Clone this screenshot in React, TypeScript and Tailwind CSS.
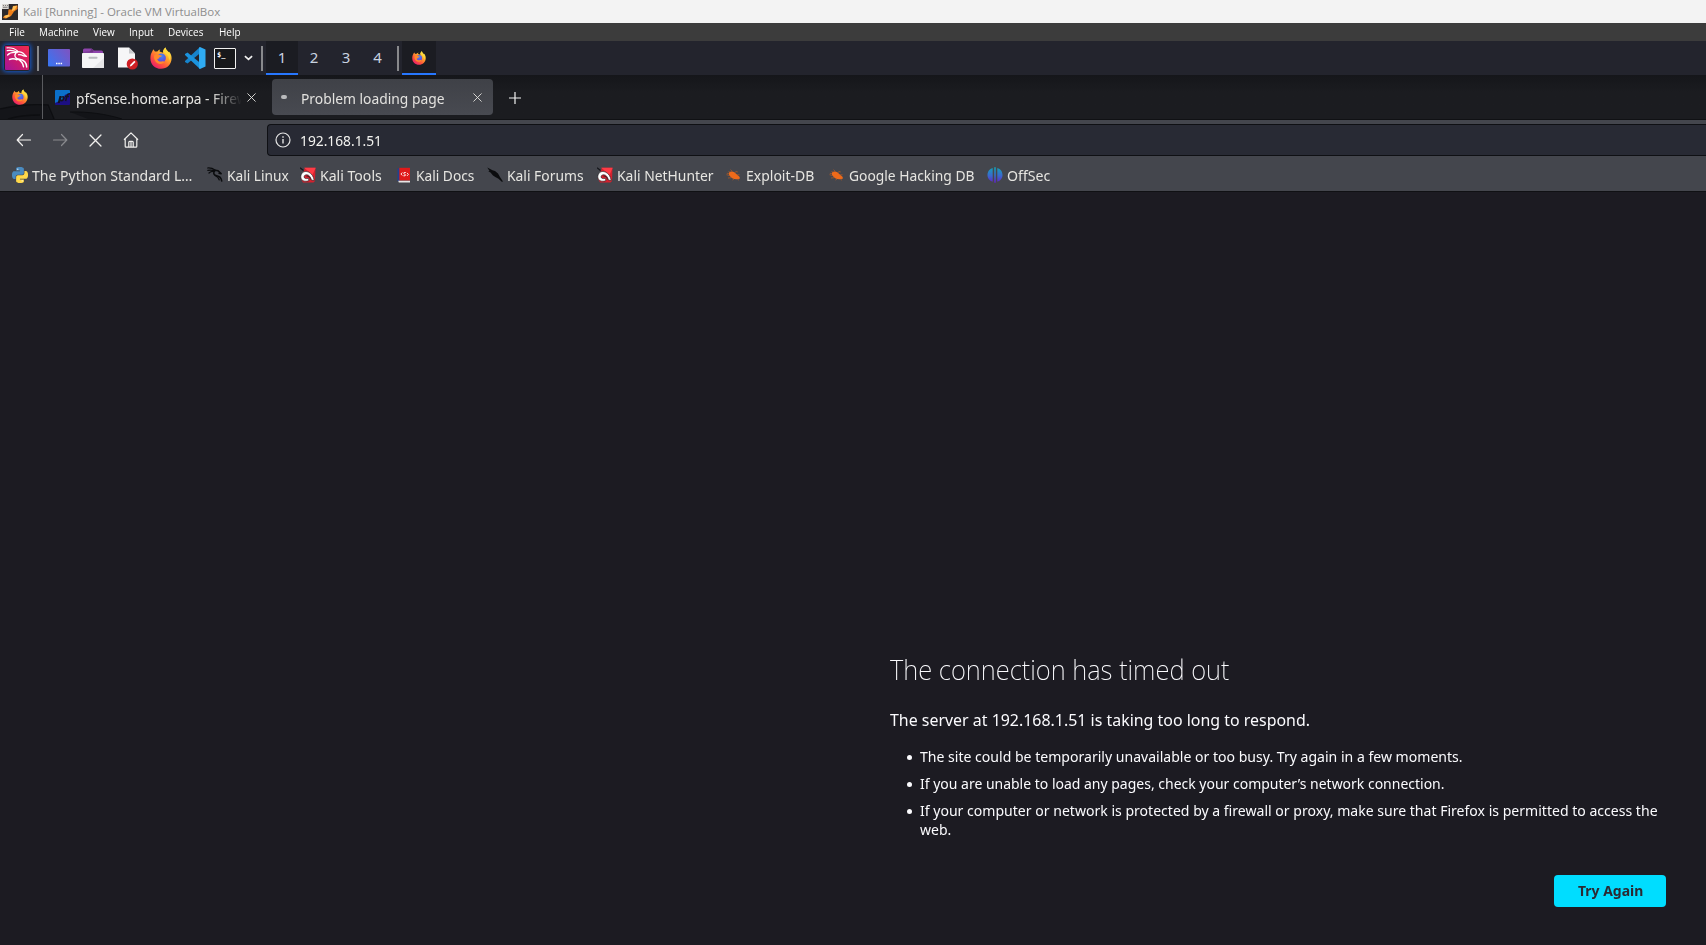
import type { ReactNode } from "react";

/* Narrow humanist text used by the guest desktop and the browser. */
function Text({ children, className = "", fit = "scale-x-[0.937]" }: { children: ReactNode; className?: string; fit?: string }) {
  return <span className={`inline-block origin-left whitespace-nowrap ${fit} ${className}`}>{children}</span>;
}

function Firefox({ className }: { className: string }) {
  return (
    <svg viewBox="0 0 32 32" className={className}>
      <defs>
        <linearGradient id="ffBody" x1="0.85" y1="0.1" x2="0.2" y2="0.95">
          <stop offset="0" stopColor="#fff04a" />
          <stop offset="0.35" stopColor="#ffa52b" />
          <stop offset="0.65" stopColor="#ff5a38" />
          <stop offset="1" stopColor="#ec1b6b" />
        </linearGradient>
        <radialGradient id="ffGlobe" cx="0.5" cy="0.3" r="0.7">
          <stop offset="0" stopColor="#3f8df5" />
          <stop offset="1" stopColor="#6a3fd6" />
        </radialGradient>
      </defs>
      <path
        d="M3 7c.6-1.800 1.600-3 2.400-3.600.3 1.400 1 2.500 1.800 3.300 1-.3 2.300-.4 3.500-.2C12 4.800 13.600 4 15 3.700c-.9 1-1.200 2-1.100 3l5.200 1.600C18.800 5 20.300 2.400 22.800.8c.2 3.200 2 4.300 4.400 6.900.4-.2.5-.6.400-1.200 3 3.200 3.900 6.900 3.800 10.200C31 25.500 24.500 31.700 16 31.700 7.300 31.700.7 25.300.6 16.600.6 12.700 1.300 9.700 3 7z"
        fill="url(#ffBody)"
      />
      <path d="M22.800.8c.2 3.200 2 4.300 4.400 6.900 2.800 4 2.700 9 .5 12.400.5-5.300-1.500-9-6-11.500-2-1-2.600-1.500-2.600-1.500.2-2.800 1.500-5 3.700-6.300z" fill="#ffd83d" />
      <circle cx="16.500" cy="16" r="6.600" fill="url(#ffGlobe)" />
      <path
        d="M6 12.500c2-2.200 4.500-2.500 6.800-1.600 1.300 1.400 3.200 1.400 4.700 1.500-.1 1.400-1.500 2-3 2.300-.8.3-1 1.200-1.600 1.900-.8.600-1.800.2-2.300 1.200.9 2.700 3.600 4 6.500 3.200 2-.6 3.500-.3 4.200.6-2.500 3.800-8.600 4.300-12.300.7C6.400 19.700 5.400 16 6 12.500z"
        fill="#ff8a2b"
      />
    </svg>
  );
}

function KaliLauncher() {
  return (
    <div className="flex size-[26px] items-center justify-center rounded-[3px] shadow-[0_0_4px_1px_#145bd0]">
      <svg viewBox="0 0 24 24" className="size-6">
        <defs>
          <linearGradient id="kaliBg" x1="1" y1="0" x2="0" y2="1">
            <stop offset="0" stopColor="#f12a4e" />
            <stop offset="0.5" stopColor="#cf1c68" />
            <stop offset="1" stopColor="#a3159b" />
          </linearGradient>
        </defs>
        <rect width="24" height="24" rx="1" fill="url(#kaliBg)" />
        <g fill="none" stroke="#fff" strokeLinecap="round" strokeLinejoin="round">
          <path d="M2 1.800C6 1.600 10 2.600 12.500 5M2.200 4.600c3.500-.6 7 0 10 1.400" strokeWidth="1.200" />
          <path d="M2.600 9C4.500 6.900 8 6 12 6.600M12.500 5.600c3 0 5.400.8 6.800 2.800l2.200 2-2.900-.5c-1.700-1-3.200-1.500-5-1.300" strokeWidth="1.300" />
          <path d="M10.800 7C8.700 9.900 10.300 12.700 14.500 13.200c4.600.7 7 2.800 7.200 7.800M11.500 12.400c4.200 2 6.600 4.300 7 8.300M4.500 13.500c2.500-1.200 5-1 7.500.3" strokeWidth="1.400" />
        </g>
      </svg>
    </div>
  );
}

function VirtualBoxIcon() {
  return (
    <svg viewBox="0 0 16 16" className="size-4">
      <rect width="16" height="16" fill="#2d2a2c" />
      <path d="M6.500 5.500h4L11 2l4.500-.5V5L12 7.500 9 12l-5 2.500L1 14l1-2 4-1.200z" fill="#ef7f1a" />
      <path d="M11 2.200l4-.5-2.200 4-3 1.300zM2 12l4.500-1.600L8 12l-4 2z" fill="#ffc15a" />
      <rect width="6.700" height="5" fill="#d9d6d2" />
      <path d="M1 1.500h1m1 0h1m1 0h1M1 3.300h4.500" stroke="#6d6a68" strokeWidth="0.800" />
    </svg>
  );
}

function DesktopIcon() {
  return (
    <svg viewBox="0 0 22 18" className="h-[18px] w-[22px]">
      <defs>
        <linearGradient id="desk" x1="0" y1="0.800" x2="1" y2="0.200">
          <stop offset="0" stopColor="#3b74f0" />
          <stop offset="1" stopColor="#7a55c4" />
        </linearGradient>
      </defs>
      <rect width="22" height="17.500" rx="0.800" fill="url(#desk)" />
      <path d="M8 14.500h1.500m.8 0h1.500m.8 0h1.500" stroke="#fff" strokeWidth="1.500" />
    </svg>
  );
}

function FolderIcon() {
  return (
    <svg viewBox="0 0 22 20" className="h-5 w-[22px]">
      <path d="M1 2a1.500 1.500 0 0 1 1.500-1.500h7L12 2.500h7.500A1.500 1.500 0 0 1 21 4v5H1z" fill="#8f44ad" />
      <path d="M9.500.5 12 2.500 10.500 4.500H1V4l7-.5z" fill="#6c3483" />
      <rect y="5" width="22" height="15" rx="0.800" fill="#f5f5f6" />
      <path d="M22 10v9.200a.8.8 0 0 1-.8.8H11z" fill="#e6e6e8" />
      <rect x="6.500" y="8.800" width="9" height="2" rx="0.800" fill="#b9bbbf" />
    </svg>
  );
}

function DocumentIcon() {
  return (
    <svg viewBox="0 0 22 23" className="h-[23px] w-[22px]">
      <path d="M1 .5h11l6 6v14H1z" fill="#f6f6f7" />
      <path d="M12 .5l6 6h-6z" fill="#c9cacd" />
      <circle cx="15.300" cy="17" r="5.600" fill="#cf1f24" />
      <path d="M12.800 19.500l.5-1.700 4-4 1.200 1.200-4 4z" fill="#fff" />
    </svg>
  );
}

function VsCodeIcon() {
  return (
    <svg viewBox="0 0 22 22" className="size-[22px]">
      <path d="M16 0v6.200L3.500 16.500 1 15.100V14z" fill="#1684cd" />
      <path d="M16 22v-6.200L3.500 5.500 1 6.900V8z" fill="#1b93de" />
      <path d="M16 0l5.500 2.500v17L16 22l-1-.7V.7z" fill="#2fabf3" />
    </svg>
  );
}

function TerminalIcon() {
  return (
    <div className="flex h-[21px] w-[22px] items-start rounded-[1px] border border-[#f1f1f1] bg-[#17181b] pt-[3px] pl-[2px]">
      <span className="font-['DejaVu_Sans_Mono',monospace] text-[7px] leading-[7px] font-bold text-white">$_</span>
    </div>
  );
}

function Python() {
  const d =
    "M14.250.18l.9.2.73.26.59.3.45.32.34.34.25.34.16.33.1.3.04.26.02.2-.01.13V8.500l-.05.63-.13.55-.21.46-.26.38-.3.31-.33.25-.35.19-.35.14-.33.1-.3.07-.26.04-.21.02H8.770l-.69.05-.59.14-.5.22-.41.27-.33.32-.27.35-.2.36-.15.37-.1.35-.07.32-.04.27-.02.21v3.060H3.170l-.21-.03-.28-.07-.32-.12-.35-.18-.36-.26-.36-.36-.35-.46-.32-.59-.28-.73-.21-.88-.14-1.050-.05-1.230.06-1.220.16-1.040.24-.87.32-.71.36-.57.4-.44.42-.33.42-.24.4-.16.36-.1.32-.05.24-.01h.16l.06.01h8.160v-.83H6.180l-.01-2.750-.02-.37.05-.34.11-.31.17-.28.25-.26.31-.23.38-.2.44-.18.51-.15.58-.12.64-.1.71-.06.77-.04.84-.02 1.270.05z";
  return (
    <svg viewBox="0 0 24 24" className="size-4">
      <path d={d} fill="#4a8bc0" />
      <path d={d} fill="#ffd94a" transform="rotate(180 12 12)" />
      <circle cx="8.700" cy="3.300" r="0.900" fill="#fff" />
      <circle cx="15.300" cy="20.700" r="0.900" fill="#fff" />
    </svg>
  );
}

function Dragon() {
  return (
    <svg viewBox="0 0 16 16" className="size-4 text-[#0b0c0e]" fill="none" stroke="currentColor" strokeLinecap="round" strokeLinejoin="round">
      <path d="M.6 1C3.500.8 6 1.500 8 3M.8 3.400C3.500 2.800 6 3.200 8 4M2 6c1.500-1.400 3-1.800 5-1.500" strokeWidth="1.200" />
      <path d="M7.300 4.300C6 6.400 7 8.400 9.700 8.700c3 .4 4.600 2 5 5.300M8.300 3.300c2 0 3.500.6 4.400 2l1.400 1.300-2-.3" strokeWidth="1.600" />
      <path d="M8 8.500c2.300.9 3.700 2.300 4.300 4.500" strokeWidth="1.200" />
    </svg>
  );
}

function KaliTools() {
  return (
    <svg viewBox="0 0 16 16" className="size-4">
      <path d="M5 .8H15.500L15 14 13.500 15.500H3L.8 11.500z" fill="#d4212e" />
      <path d="M4 .8H15.700L12.500 8 8 4z" fill="#ff3b45" />
      <path d="M0 .8 3.500 3.500" stroke="#15161a" strokeWidth="1.300" />
      <path
        d="M.8 9.500C1 5.500 4.500 3.500 8.300 5c3.200 1.300 5.300 4.500 5.900 8.500l-2.700-.4C10.500 9.500 9 8 7 7.800c-2-.2-3 .9-2.900 2.200.1 1.500 2 2 4.200 1.300l.7 2.200C5.500 15.200.6 14 .8 9.500z"
        fill="#fff"
        stroke="#1a1b1e"
        strokeWidth="0.600"
      />
      <path d="M6.500 9.200c2-.5 3.500.9 4 3.300" fill="none" stroke="#1a1b1e" strokeWidth="0.700" />
    </svg>
  );
}

function KaliDocs() {
  return (
    <svg viewBox="0 0 16 16" className="size-4">
      <path d="M1.500 1.500 4 1v12.500l-2.500.8z" fill="#23408e" />
      <path d="M3.300.8H14v12.700H3.300z" fill="#e01a1a" />
      <path d="M2.200 13.800H14V15.400H2.800z" fill="#e8e6e6" />
      <path d="M6.300 5.500 4.900 7l1.400 1.500M11 5.900 12.400 7.400 11 8.900M9.800 5.500H8.200l-.6.900 2 1.400-.6 1H7.400" fill="none" stroke="#fff" strokeWidth="0.900" />
    </svg>
  );
}

function KaliForums() {
  return (
    <svg viewBox="0 0 16 16" className="size-4">
      <path d="M.3.500 5.500 3.200 8 4l3 2.600 2 3.400 3 4.500-1.200.2-3.300-3-2.800-1.500L6 8.500 3.500 5.500 1.200 4.200l1.300-.1z" fill="#0b0c0e" />
    </svg>
  );
}

function ExploitBug() {
  return (
    <svg viewBox="0 0 16 16" className="size-4">
      <path d="M3 5.500C5 3.800 8 4.500 10 6.700l3.500 3 .5 1.800-2.500.7C8 12.600 5 11.200 3 8z" fill="#ee6a1a" />
      <path
        d="M4 5.500 2.500 4M6.500 4.500 4.500 2.700M9 5.800l.8-1.300 2 .5M3.500 8.500l-3-.8M5.500 10.700l-3.500.3M8 12l-1.500 1M11.500 12l1.500 1.300M.8 6.300l2.200.2M11 8l2.500-.3"
        stroke="#c9601f"
        strokeWidth="0.600"
        fill="none"
      />
    </svg>
  );
}

function OffSecIcon() {
  return (
    <svg viewBox="0 0 16 16" className="size-4">
      <defs>
        <linearGradient id="offsec" gradientUnits="userSpaceOnUse" x1="8" y1="0" x2="8" y2="16">
          <stop offset="0" stopColor="#12a5b4" />
          <stop offset="0.550" stopColor="#3a68cf" />
          <stop offset="1" stopColor="#6420c0" />
        </linearGradient>
      </defs>
      <path d="M5.700 1v13.700C2.500 14 .5 11.200.5 8S2.500 1.800 5.700 1zM10.300 1c3.300.8 5.200 3.800 5.200 7s-2 6-5.200 6.700zM7.200.3h1.600v15.400H7.200z" fill="url(#offsec)" />
    </svg>
  );
}

function PfSenseIcon() {
  return (
    <svg viewBox="0 0 15 15" className="size-[15px]">
      <rect width="15" height="15" rx="1" fill="#1c0f83" />
      <path d="M1 0h13a1 1 0 0 1 1 1v2.500L12 4l-2.200 1L8.500 9 0 13V1a1 1 0 0 1 1-1z" fill="#0b70c9" />
      <path d="M2.700 13 4.500 6h2l-.2.800C8 5.200 10 6 9.600 8.300 9.200 11 7 12 5.300 11L4.800 13z" fill="#14131f" />
      <path d="M10.600 11l1.600-5.500C12.600 4.200 13.500 3.600 15 3.800M10 6.500h4" stroke="#14131f" strokeWidth="1.500" fill="none" />
      <path d="M5.800 9.500l.6-2 1.400-.1-.5 2z" fill="#0b70c9" />
    </svg>
  );
}

function Cross({ className }: { className: string }) {
  return (
    <svg viewBox="0 0 10 10" className={className} fill="none" stroke="currentColor" strokeLinecap="round">
      <path d="M.8.800 9.200 9.200M9.200.8.800 9.200" />
    </svg>
  );
}

function Arrow({ className }: { className: string }) {
  return (
    <svg viewBox="0 0 16 16" className={className} fill="none" stroke="currentColor" strokeWidth="1.200" strokeLinecap="round" strokeLinejoin="round">
      <path d="M1.500 8H14.500M6.500 2.500 1.200 8l5.300 5.500" />
    </svg>
  );
}

const menus = [
  { label: "File", box: "w-[30px]" },
  { label: "Machine", box: "w-[53.500px]" },
  { label: "View", box: "w-[36px]" },
  { label: "Input", box: "w-[39.500px]" },
  { label: "Devices", box: "w-[51px]" },
  { label: "Help", box: "w-[40px]" },
];

const bookmarks = [
  { label: "The Python Standard L…", icon: <Python />, box: "w-[195px]", fit: "scale-x-[0.958]" },
  { label: "Kali Linux", icon: <Dragon />, box: "w-[93px]" },
  { label: "Kali Tools", icon: <KaliTools />, box: "w-[95.500px]", fit: "scale-x-[0.960]" },
  { label: "Kali Docs", icon: <KaliDocs />, box: "w-[91.500px]" },
  { label: "Kali Forums", icon: <KaliForums />, box: "w-[110px]", fit: "scale-x-[0.945]" },
  { label: "Kali NetHunter", icon: <KaliTools />, box: "w-[129px]", fit: "scale-x-[0.947]" },
  { label: "Exploit-DB", icon: <ExploitBug />, box: "w-[103px]", fit: "scale-x-[0.955]" },
  { label: "Google Hacking DB", icon: <ExploitBug />, box: "w-[158px]", fit: "scale-x-[0.943]" },
  { label: "OffSec", icon: <OffSecIcon />, box: "w-[70px]", fit: "scale-x-[0.965]" },
];

function HostBars() {
  return (
    <>
      <div className="flex h-[23px] items-center gap-[5px] bg-[#f3f3f3] pl-[2px]">
        <VirtualBoxIcon />
        <span className="font-['Open_Sans',sans-serif] text-[11.500px] leading-[23px] text-[#8e8e8e]">
          Kali [Running] - Oracle VM VirtualBox
        </span>
      </div>
      <div className="flex h-[18px] items-center bg-[#3c3c3c] pl-[9px] font-['Open_Sans',sans-serif] text-[11px] leading-[18px] text-white">
        {menus.map((m) => (
          <div key={m.label} className={`shrink-0 ${m.box}`}>
            <span className="inline-block origin-left scale-x-[0.905]">{m.label}</span>
          </div>
        ))}
      </div>
    </>
  );
}

function Separator() {
  return <div className="mt-[5px] h-[25px] w-[2px] shrink-0 bg-[#88898c]" />;
}

function Taskbar() {
  return (
    <div className="flex h-[34px] items-start bg-[#23242d]">
      <div className="flex h-[34px] w-[37px] items-center pl-[4px]">
        <KaliLauncher />
      </div>
      <Separator />
      <div className="flex h-[34px] w-[222px] items-center pl-[9px]">
        <div className="w-[34px]"><DesktopIcon /></div>
        <div className="w-[35px]"><FolderIcon /></div>
        <div className="w-[33px]"><DocumentIcon /></div>
        <div className="w-[34px]"><Firefox className="size-[22px]" /></div>
        <div className="w-[30px]"><VsCodeIcon /></div>
        <TerminalIcon />
        <svg viewBox="0 0 10 6" className="ml-[8px] h-[6px] w-[9px]" fill="none" stroke="#f0f0f0" strokeWidth="1.800">
          <path d="M1 1l4 3.600L9 1" />
        </svg>
      </div>
      <Separator />
      <div className="ml-[3px] flex h-[34px] text-[15px] text-[#c9d3e0]">
        <div className="flex w-8 justify-center border-b-2 border-[#2777ff] bg-[#1b1c22] leading-[32px]">1</div>
        <div className="flex w-8 justify-center leading-[32px]">2</div>
        <div className="flex w-8 justify-center leading-[32px]">3</div>
        <div className="flex w-[35px] justify-center pr-1 leading-[32px]">4</div>
      </div>
      <Separator />
      <div className="ml-[3px] flex h-[34px] w-[34px] items-center justify-center border-b-2 border-[#2777ff] bg-[#1b1c22] pt-px">
        <Firefox className="size-[14px]" />
      </div>
    </div>
  );
}

function TabStrip() {
  return (
    <div className="relative flex h-[44px] bg-linear-to-b from-[#15161a] to-[#1b1c20] to-40%">
      <svg className="absolute top-0 left-0 h-[44px] w-[140px]" viewBox="0 0 140 44" fill="none">
        <path d="M0 35c12-3 28-5 47-4l6 13H0z" fill="#141519" />
        <path d="M0 34c14-3.500 30-5 48-4l6 14M8 44c10-3 22-4 32-4" stroke="#0d0e11" strokeWidth="1.500" />
        <path d="M70 37c18-.5 36 2 52 7H88z" fill="#131418" />
        <path d="M70 37c18-.5 36 2 52 7" stroke="#0d0e11" strokeWidth="1" />
      </svg>
      <div className="relative flex w-[42px] shrink-0 items-center pl-[12px]">
        <Firefox className="size-4" />
      </div>
      <div className="relative flex w-[230px] shrink-0 items-center border-l border-[#5a5b5f] pl-[12px] text-[#e7e6e3]">
        <PfSenseIcon />
        <div className="mt-[2px] ml-[6px] w-[169px] shrink-0 mask-r-from-80% mask-r-to-98%">
          <Text className="text-[14.670px] leading-6">pfSense.home.arpa - Firew</Text>
        </div>
        <Cross className="ml-[2px] size-[9px] shrink-0" />
      </div>
      <div className="relative mt-[4px] flex h-[36px] w-[221px] shrink-0 items-center rounded-[4px] bg-linear-to-b from-[#3f4147] to-[#484a51] pl-[9px] text-[#e3e2df]">
        <div className="h-[4px] w-[6px] rounded-full bg-[#b9babc]" />
        <div className="mt-[2px] ml-[14px] w-[172px] shrink-0">
          <Text fit="scale-x-[0.943]" className="text-[14.670px] leading-6">Problem loading page</Text>
        </div>
        <Cross className="size-[9px] shrink-0" />
      </div>
      <svg viewBox="0 0 12 12" className="relative mt-[17px] ml-[16px] size-[12px]" stroke="#f2f2f2" strokeWidth="1.200">
        <path d="M6 0v12M0 6h12" />
      </svg>
    </div>
  );
}

function Toolbar() {
  return (
    <div className="flex h-[73px] flex-col border-y border-[#101114] bg-[#44464d] text-[#f1f0ee]">
      <div className="flex h-[37px] pt-[4px]">
        <div className="flex h-[32px] w-[267px] shrink-0 items-center pl-[16px]">
          <Arrow className="mr-[20px] size-4" />
          <Arrow className="mr-[21px] size-4 rotate-180 text-[#898a8e]" />
          <Cross className="mr-[21px] size-[13px]" />
          <svg viewBox="0 0 16 16" className="size-4" fill="none" stroke="currentColor" strokeWidth="1.200" strokeLinejoin="round">
            <path d="M1 7.800 8 .9l7 6.900M2.200 7v7.200c0 .5.4.9.9.9h9.800c.5 0 .9-.4.9-.9V7M5.800 15V10.300c0-.5.4-.9.9-.9h2.600c.5 0 .9.400.9.900V15M8 9.400V15" />
          </svg>
        </div>
        <div className="flex h-[32px] grow items-center rounded-l-[4px] border border-r-0 border-[#0f1014] bg-[#282a34] pl-[7px]">
          <svg viewBox="0 0 16 16" className="size-[16px]" fill="none" stroke="#e4e4e4" strokeWidth="1.200">
            <circle cx="8" cy="8" r="7" />
            <path d="M8 7v4.500M8 4.300v1.500" strokeWidth="1.400" />
          </svg>
          <Text fit="scale-x-[0.918]" className="ml-[9px] text-[15px] leading-6 text-[#f3f3f0]">192.168.1.51</Text>
        </div>
      </div>
      <div className="flex h-[34px] items-center pt-px pl-[12px] text-[#e6e5e1]">
        {bookmarks.map((b) => (
          <div key={b.label} className={`flex shrink-0 items-center gap-[4px] ${b.box}`}>
            <span className="shrink-0">{b.icon}</span>
            <Text fit={b.fit} className="text-[14.670px] leading-6">{b.label}</Text>
          </div>
        ))}
      </div>
    </div>
  );
}

function Bullet({ children }: { children: ReactNode }) {
  return (
    <li className="flex">
      <span className="mt-[8px] mr-[8px] ml-px size-[5px] shrink-0 rounded-full bg-[#fbfbfe]" />
      <div className="leading-[19px]">{children}</div>
    </li>
  );
}

function ErrorPage() {
  return (
    <main className="flex grow flex-col bg-[#1c1b22] pt-[454px] pl-[890px] text-[#fbfbfe]">
      <h1 className="h-[48px]">
        <Text fit="scale-x-[0.950]" className="text-[27px] leading-[48px] font-extralight">The connection has timed out</Text>
      </h1>
      <p className="mt-[14px] h-[24px]">
        <Text className="text-[17px] leading-6">The server at 192.168.1.51 is taking too long to respond.</Text>
      </p>
      <ul className="mt-[15px] flex flex-col gap-[8px] pl-[16px] text-[15px]">
        <Bullet>
          <Text>The site could be temporarily unavailable or too busy. Try again in a few moments.</Text>
        </Bullet>
        <Bullet>
          <Text fit="scale-x-[0.932]">If you are unable to load any pages, check your computer’s network connection.</Text>
        </Bullet>
        <Bullet>
          <Text>
            If your computer or network is protected by a firewall or proxy, make sure that Firefox is permitted to access the
            <br />
            web.
          </Text>
        </Bullet>
      </ul>
      <button className="mt-[36px] ml-[664px] flex h-[32px] w-[112px] rounded-[4px] bg-[#00ddff] pl-[24px] text-[#2b2a33]">
        <Text fit="scale-x-[0.930]" className="text-[15px] leading-[30px] font-bold">Try Again</Text>
      </button>
    </main>
  );
}

export default function App() {
  return (
    <div className="flex h-[945px] w-[1706px] flex-col overflow-hidden bg-[#1c1b22] font-['Noto_Sans',sans-serif]">
      <HostBars />
      <Taskbar />
      <TabStrip />
      <Toolbar />
      <ErrorPage />
    </div>
  );
}
